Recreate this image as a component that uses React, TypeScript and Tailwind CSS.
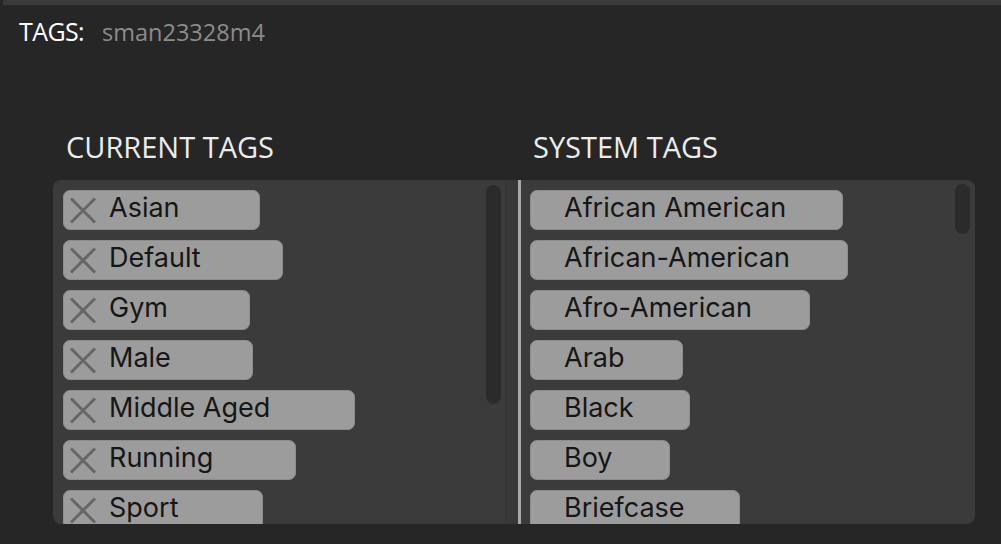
import React from "react";

const current = [
  { t: "Asian", w: "w-[197px]" },
  { t: "Default", w: "w-[220px]" },
  { t: "Gym", w: "w-[187px]" },
  { t: "Male", w: "w-[190px]" },
  { t: "Middle Aged", w: "w-[292px]" },
  { t: "Running", w: "w-[233px]" },
  { t: "Sport", w: "w-[200px]" },
];

const system = [
  { t: "African American", w: "w-[313px]" },
  { t: "African-American", w: "w-[318px]" },
  { t: "Afro-American", w: "w-[280px]" },
  { t: "Arab", w: "w-[153px]" },
  { t: "Black", w: "w-[160px]" },
  { t: "Boy", w: "w-[140px]" },
  { t: "Briefcase", w: "w-[210px]" },
];

function XIcon() {
  return (
    <svg width="28" height="27" viewBox="0 0 28 27" className="shrink-0">
      <path d="M2 1.5 L26 25.5 M26 1.5 L2 25.5" stroke="#666666" strokeWidth="3" fill="none" />
    </svg>
  );
}

export default function App() {
  return (
    <div className="w-[1001px] h-[544px] bg-[#262626] overflow-hidden flex flex-col" style={{ fontFamily: "Inter, 'Noto Sans', sans-serif" }}>
      <div className="h-[5px] ml-[3px] bg-[#3b3b3b] shrink-0" />
      <div className="flex items-baseline pl-[19px] pt-[11px] h-[50px] leading-[30px]" style={{ fontFamily: "'Open Sans', sans-serif" }}>
        <span className="text-white text-[25px] tracking-[-0.6px]">TAGS:</span>
        <span className="text-[#8c8c8c] ml-[18px] text-[23.5px]">sman23328m4</span>
      </div>
      <div className="ml-[53px] w-[922px] mt-[72px]">
        <div className="flex h-[40px] text-[29px] leading-[40px] text-[#ececec]" style={{ fontFamily: "'Open Sans', sans-serif" }}>
          <div className="w-[467px] pl-[13px]">CURRENT TAGS</div>
          <div className="pl-[13px]">SYSTEM TAGS</div>
        </div>
        <div className="mt-[13px] h-[344px] bg-[#3b3b3b] rounded-[8px] flex overflow-hidden">
          <div className="relative w-[452px] shrink-0">
            <div className="flex flex-col gap-[10px] pt-[10px] pl-[10px]">
              {current.map((c) => (
                <div key={c.t} className={`${c.w} h-[40px] shrink-0 rounded-[7px] bg-[#9c9c9c] border border-[#8d8d8d] flex items-center pl-[5px] text-[27px] text-[#161616]`}>
                  <XIcon />
                  <span className="ml-[12px] leading-none pb-[5px]">{c.t}</span>
                </div>
              ))}
            </div>
            <div className="absolute left-[433px] top-[5px] w-[15px] h-[219px] rounded-full bg-[#2b2b2b]" />
          </div>
          <div className="w-px bg-[#333333] shrink-0" />
          <div className="w-[12px] bg-[#383838] shrink-0" />
          <div className="w-[3px] bg-[#a8a8a8] shrink-0" />
          <div className="relative flex-1">
            <div className="flex flex-col gap-[10px] pt-[10px] pl-[9px]">
              {system.map((c) => (
                <div key={c.t} className={`${c.w} h-[40px] shrink-0 rounded-[7px] bg-[#9c9c9c] border border-[#8d8d8d] flex items-center pl-[33px] text-[27px] text-[#161616]`}>
                  <span className="leading-none pb-[5px]">{c.t}</span>
                </div>
              ))}
            </div>
            <div className="absolute left-[434px] top-[4px] w-[15px] h-[50px] rounded-full bg-[#2b2b2b]" />
          </div>
        </div>
      </div>
    </div>
  );
}
